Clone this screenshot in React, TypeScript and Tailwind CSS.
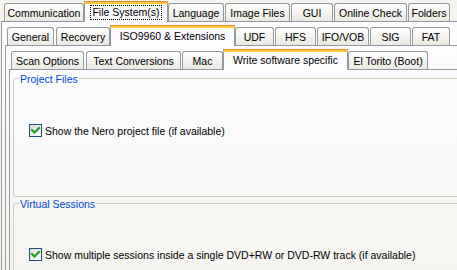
type TabDef = {
  label: string;
  w: string;
  ml?: string;
  selected?: boolean;
  focus?: boolean;
};

const mainTabs: TabDef[] = [
  { label: "Communication", w: "w-[80px]" },
  { label: "File System(s)", w: "w-[84px]", selected: true, focus: true },
  { label: "Language", w: "w-[56px]" },
  { label: "Image Files", w: "w-[65px]", ml: "ml-[1px]" },
  { label: "GUI", w: "w-[42px]", ml: "ml-[1px]" },
  { label: "Online Check", w: "w-[73px]", ml: "ml-[1px]" },
  { label: "Folders", w: "w-[42px]", ml: "ml-[1px]" },
];

const fsTabs: TabDef[] = [
  { label: "General", w: "w-[47px]" },
  { label: "Recovery", w: "w-[54px]", ml: "ml-[2px]" },
  { label: "ISO9960 & Extensions", w: "w-[125px]", selected: true },
  { label: "UDF", w: "w-[39px]" },
  { label: "HFS", w: "w-[41px]", ml: "ml-[1px]" },
  { label: "IFO/VOB", w: "w-[52px]", ml: "ml-[1px]" },
  { label: "SIG", w: "w-[41px]", ml: "ml-[1px]" },
  { label: "FAT", w: "w-[38px]", ml: "ml-[1px]" },
];

const isoTabs: TabDef[] = [
  { label: "Scan Options", w: "w-[73px]" },
  { label: "Text Conversions", w: "w-[95px]", ml: "ml-[2px]" },
  { label: "Mac", w: "w-[41px]", ml: "ml-[1px]" },
  { label: "Write software specific", w: "w-[125px]", selected: true },
  { label: "El Torito (Boot)", w: "w-[80px]" },
];

function Tab({ t }: { t: TabDef }) {
  if (t.selected) {
    return (
      <div
        className={`relative z-10 -mb-px flex h-[21px] shrink-0 flex-col border-x border-[#919b9c] bg-[#fcfcfe] ${t.w}`}
      >
        <div className="-mx-px h-[3px] rounded-t-[3px] border-t border-[#e68b2c] bg-[#ffc83c]" />
        <div className="flex justify-center pt-[2px] leading-[13px]">
          <span className={t.focus ? "outline outline-1 outline-dotted outline-black px-px" : ""}>
            {t.label}
          </span>
        </div>
      </div>
    );
  }
  return (
    <div
      className={`flex h-[18px] shrink-0 justify-center rounded-t-[3px] border-x border-t border-[#919b9c] bg-gradient-to-b from-white to-[#e9e8e1] pt-[3px] leading-[13px] ${t.w} ${t.ml ?? ""}`}
    >
      {t.label}
    </div>
  );
}

function TabRow({ tabs, className }: { tabs: TabDef[]; className: string }) {
  return (
    <div className={`flex shrink-0 items-end whitespace-nowrap ${className}`}>
      {tabs.map((t) => (
        <Tab key={t.label} t={t} />
      ))}
    </div>
  );
}

function CheckBox() {
  return (
    <div className="h-[13px] w-[13px] shrink-0 border border-[#1c5180] bg-gradient-to-br from-[#dcdcd7] to-white">
      <svg width="11" height="11" viewBox="0 0 11 11">
        <path d="M2 5 L4.5 7.5 L9 3" fill="none" stroke="#21a121" strokeWidth="2.2" strokeLinecap="square" />
      </svg>
    </div>
  );
}

function GroupBox({
  title,
  labelBg,
  className,
  children,
}: {
  title: string;
  labelBg: string;
  className: string;
  children: React.ReactNode;
}) {
  return (
    <div className={`relative -mr-[30px] rounded-[3px] border border-[#d0d0bf] ${className}`}>
      <span className={`absolute -top-[6px] left-[5px] px-px leading-[13px] text-[#0046d5] ${labelBg}`}>
        {title}
      </span>
      {children}
    </div>
  );
}

export default function App() {
  return (
    <div className="flex h-[270px] w-[457px] flex-col overflow-hidden bg-[#f5f4ef] font-['Liberation_Sans',Arial,sans-serif] text-[10.5px] text-black">
      <TabRow tabs={mainTabs} className="h-[21px] pl-[4px]" />
      <div className="ml-px flex flex-1 flex-col border-l border-t border-[#919b9c] bg-gradient-to-b from-[#fcfcfe] to-[#f4f3ee] pl-[3px]">
        <TabRow tabs={fsTabs} className="h-[23px] pl-[2px]" />
        <div className="flex flex-1 flex-col border-l border-t border-[#919b9c] bg-gradient-to-b from-[#fcfcfe] to-[#f4f3ee] pl-[3px]">
          <TabRow tabs={isoTabs} className="h-[23px] pl-[2px]" />
          <div className="flex flex-1 flex-col border-l border-t border-[#919b9c] bg-gradient-to-b from-[#fcfcfe] to-[#f3f2ec] pl-[3px]">
            <GroupBox title="Project Files" labelBg="bg-[#fcfcfd]" className="mt-[8px] h-[119px]">
              <div className="ml-[15px] mt-[44px] flex items-center whitespace-nowrap">
                <CheckBox />
                <span className="ml-[3px] mt-[2px] leading-[13px]">Show the Nero project file (if available)</span>
              </div>
            </GroupBox>
            <GroupBox title="Virtual Sessions" labelBg="bg-[#f7f6f2]" className="mt-[6px] h-[120px]">
              <div className="ml-[15px] mt-[43px] flex items-center whitespace-nowrap">
                <CheckBox />
                <span className="ml-[3px] mt-[2px] leading-[13px]">
                  Show multiple sessions inside a single DVD+RW or DVD-RW track (if available)
                </span>
              </div>
            </GroupBox>
          </div>
        </div>
      </div>
    </div>
  );
}
